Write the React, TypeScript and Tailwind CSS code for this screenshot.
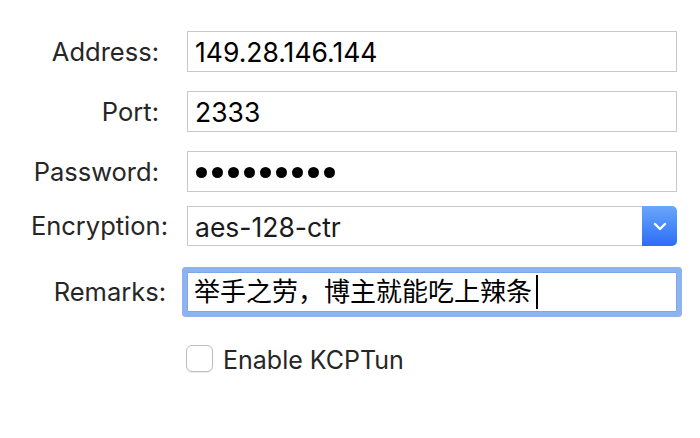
const font = { fontFamily: 'Inter, "Noto Sans CJK SC", sans-serif' };

function Label({ text, pr }: { text: string; pr: string }) {
  return (
    <div className={`w-[187px] shrink-0 text-right text-[25.5px] leading-none text-[#262626] ${pr}`}>{text}</div>
  );
}

function Field({ children }: { children: React.ReactNode }) {
  return (
    <div className="flex h-[41px] w-[490px] items-center border border-[#c9c9c9] bg-white pl-[7px] pt-[2px] text-[26.5px] leading-none text-black">
      {children}
    </div>
  );
}

export default function App() {
  return (
    <div className="h-[438px] w-[700px] bg-white pt-[31px]" style={font}>
      <div className="flex items-center">
        <Label text="Address:" pr="pr-[28px]" />
        <Field>149.28.146.144</Field>
      </div>

      <div className="mt-[19px] flex items-center">
        <Label text="Port:" pr="pr-[28px]" />
        <Field>2333</Field>
      </div>

      <div className="mt-[19px] flex items-center">
        <Label text="Password:" pr="pr-[28px]" />
        <Field>
          <div className="flex gap-[5px] pl-[1px]">
            {Array.from({ length: 9 }).map((_, i) => (
              <div key={i} className="h-[11px] w-[11px] rounded-full bg-black" />
            ))}
          </div>
        </Field>
      </div>

      <div className="mt-[14px] flex items-center">
        <Label text="Encryption:" pr="pr-[19px]" />
        <div className="flex h-[40px] w-[490px]">
          <div className="flex flex-1 items-center border border-r-0 border-[#c9c9c9] pl-[7px] pt-[2px] text-[26.5px] leading-none text-[#1a1a1a]">
            aes-128-ctr
          </div>
          <div className="flex w-[35px] items-center justify-center rounded-r-[5px] bg-gradient-to-b from-[#6aa6fb] to-[#2c6cf6]">
            <svg width="14" height="9" viewBox="0 0 14 9" fill="none">
              <path d="M2 2l5 5 5-5" stroke="white" strokeWidth="2.4" strokeLinecap="round" strokeLinejoin="round" />
            </svg>
          </div>
        </div>
      </div>

      <div className="mt-[26px] flex items-center">
        <Label text="Remarks:" pr="pr-[21px]" />
        <div className="flex h-[40px] w-[490px] items-center rounded-[1px] border border-[#7ea6ea] bg-white pl-[6px] text-[26px] text-black shadow-[0_0_0_5px_#8eb3f1]">
          <span className="leading-none">举手之劳，博主就能吃上辣条</span>
          <span className="ml-[4px] h-[34px] w-[2px] bg-black" />
        </div>
      </div>

      <div className="mt-[32px] flex items-center pl-[186px]">
        <div className="h-[27px] w-[27px] rounded-[6px] border border-[#bdbdbd] bg-white shadow-[0_1px_1px_rgba(0,0,0,0.08)]" />
        <span className="ml-[10px] pt-[4px] text-[25px] leading-none text-[#262626]">Enable KCPTun</span>
      </div>
    </div>
  );
}
